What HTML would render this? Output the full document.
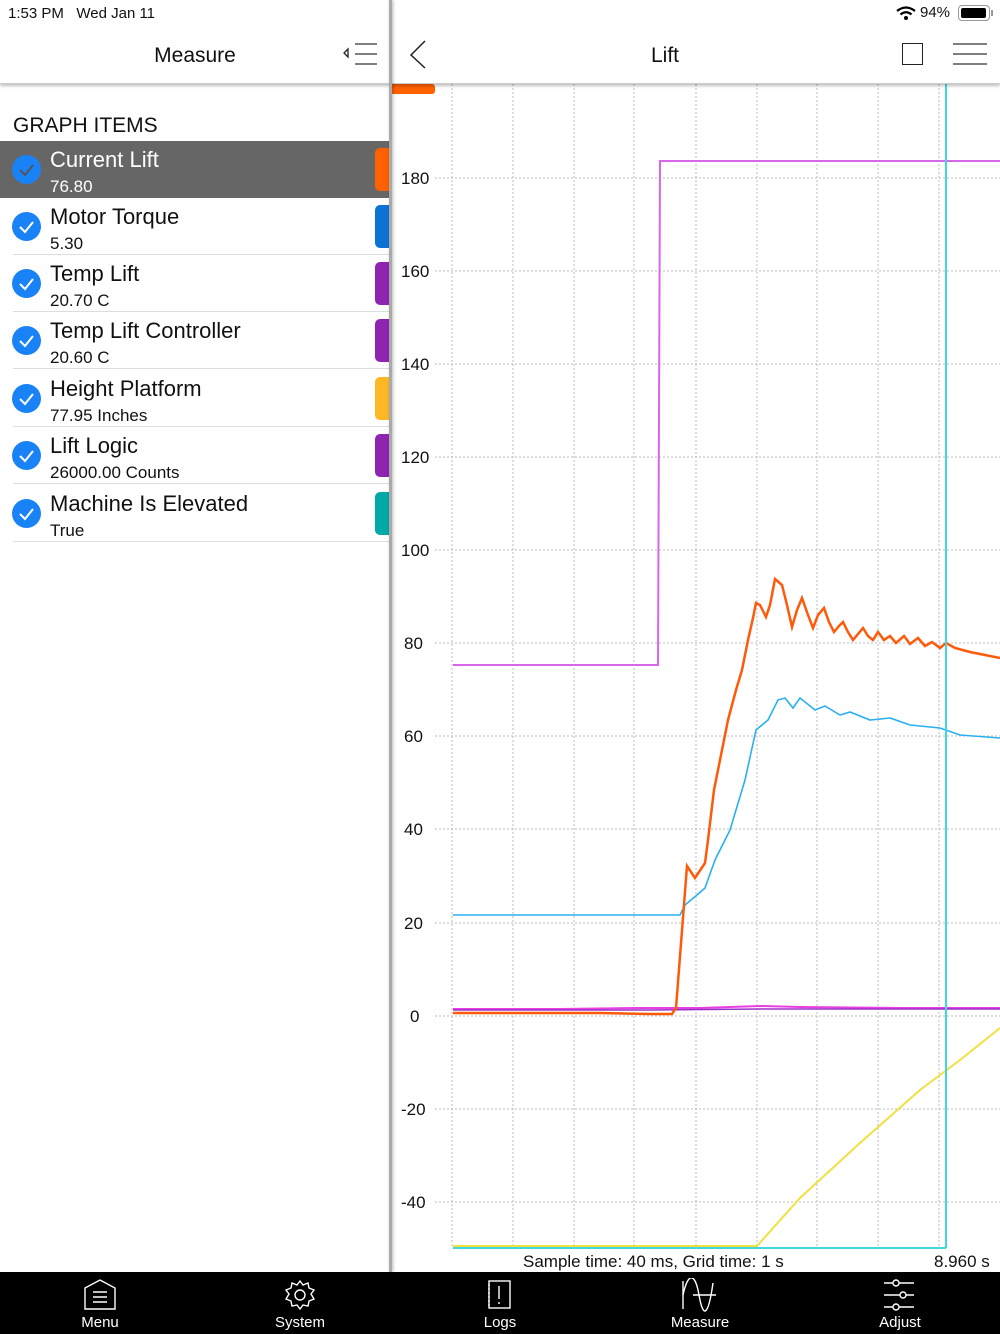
<!DOCTYPE html>
<html><head><meta charset="utf-8"><style>
*{margin:0;padding:0;box-sizing:border-box}
body{width:1000px;height:1334px;position:relative;background:#fff;font-family:"Liberation Sans",sans-serif;overflow:hidden;color:#111}
.abs{position:absolute}
.row{position:absolute;left:0;width:390px;height:57px}
.row .sep{position:absolute;left:13px;right:0;bottom:0;height:1px;background:#ddd}
.chk{position:absolute;left:12px;top:14px;width:29px;height:29px;border-radius:50%;background:#1a82f7}
.name{position:absolute;left:50px;top:6px;font-size:22px}
.val{position:absolute;left:50px;top:36px;font-size:17px}
.tab{position:absolute;left:375px;top:7px;width:15px;height:43px;border-radius:5px 0 0 5px}
.nav{position:absolute;top:1314px;width:80px;text-align:center;color:#fff;font-size:15px}
</style></head><body>
<svg class="abs" style="left:390px;top:0" width="610" height="1272" viewBox="390 0 610 1272">
<g stroke="#bbb" stroke-width="1" stroke-dasharray="2,2">
<line x1="452" y1="84" x2="452" y2="1247"/><line x1="513" y1="84" x2="513" y2="1247"/><line x1="574" y1="84" x2="574" y2="1247"/><line x1="634" y1="84" x2="634" y2="1247"/><line x1="696" y1="84" x2="696" y2="1247"/><line x1="757" y1="84" x2="757" y2="1247"/><line x1="817" y1="84" x2="817" y2="1247"/><line x1="878" y1="84" x2="878" y2="1247"/><line x1="939" y1="84" x2="939" y2="1247"/>
<line x1="435" y1="178" x2="1000" y2="178"/><line x1="435" y1="271" x2="1000" y2="271"/><line x1="435" y1="364" x2="1000" y2="364"/><line x1="435" y1="457" x2="1000" y2="457"/><line x1="435" y1="550" x2="1000" y2="550"/><line x1="435" y1="643" x2="1000" y2="643"/><line x1="435" y1="736" x2="1000" y2="736"/><line x1="435" y1="829" x2="1000" y2="829"/><line x1="435" y1="923" x2="1000" y2="923"/><line x1="435" y1="1016" x2="1000" y2="1016"/><line x1="435" y1="1109" x2="1000" y2="1109"/><line x1="435" y1="1202" x2="1000" y2="1202"/>
</g>
<g font-size="17" fill="#111" font-family="Liberation Sans,sans-serif">
<text x="401" y="184">180</text><text x="401" y="277">160</text><text x="401" y="370">140</text><text x="401" y="463">120</text><text x="401" y="556">100</text><text x="404" y="649">80</text><text x="404" y="742">60</text><text x="404" y="835">40</text><text x="404" y="929">20</text><text x="410" y="1022">0</text><text x="401" y="1115">-20</text><text x="401" y="1208">-40</text>
</g>
<polyline fill="none" stroke="#d668e8" stroke-width="2" points="453,665 658,665 660,161 1000,161"/>
<polyline fill="none" stroke="#e840e0" stroke-width="2" points="453,1009 560,1009 640,1008 700,1008 760,1006 800,1007 900,1008 1000,1008"/>
<polyline fill="none" stroke="#9b30c8" stroke-width="1.5" points="453,1010 650,1010 760,1009 1000,1009"/>
<polyline fill="none" stroke="#f0e040" stroke-width="2" points="453,1246 757,1246 800,1198 860,1143 920,1090 960,1060 1000,1028"/>
<polyline fill="none" stroke="#29b0f0" stroke-width="1.6" points="453,915 680,915 685,905 697,895 705,888 715,860 730,830 745,780 756,730 768,720 778,700 785,698 793,708 800,698 815,710 825,706 840,715 850,712 870,720 890,718 910,725 940,728 960,735 1000,738"/>
<polyline fill="none" stroke="#ff5a0a" stroke-width="2.5" points="453,1013 600,1013 650,1014 672,1014 676,1008 687,866 695,878 705,863 708,840 714,790 720,760 728,720 736,690 742,670 748,640 753,618 756,603 760,605 766,617 770,605 775,579 782,585 787,605 792,627 797,610 802,598 808,615 813,628 818,615 824,608 829,622 834,632 839,626 843,622 848,632 853,640 858,634 863,628 868,636 873,640 878,632 884,640 890,636 896,643 904,636 910,644 918,638 925,646 932,642 940,648 946,643 955,648 970,652 985,655 1000,658"/>
<line x1="946" y1="84" x2="946" y2="1248" stroke="#40d8e0" stroke-width="2"/>
<line x1="453" y1="1248" x2="946" y2="1248" stroke="#40d8e0" stroke-width="2"/>
<rect x="390" y="84" width="45" height="10" rx="3" fill="#ff6000"/>
<text x="523" y="1267" font-size="17" fill="#111" font-family="Liberation Sans,sans-serif">Sample time: 40 ms, Grid time: 1 s</text>
<text x="934" y="1267" font-size="17" fill="#111" font-family="Liberation Sans,sans-serif">8.960 s</text>
</svg>
<div class="abs" style="left:390px;top:0;width:610px;height:84px;background:#fff;border-bottom:1px solid #ccc;box-shadow:0 2px 3px rgba(0,0,0,.25)"></div>
<div class="abs" style="left:0;top:0;width:390px;height:84px;background:#fff;border-bottom:1px solid #ccc;box-shadow:0 2px 3px rgba(0,0,0,.25)"></div>
<div class="abs" style="left:8px;top:5px;font-size:15px">1:53 PM&nbsp;&nbsp;&nbsp;Wed Jan 11</div>
<div class="abs" style="left:0;width:390px;top:44px;text-align:center;font-size:21px">Measure</div>
<svg class="abs" style="left:340px;top:40px" width="40" height="26"><path d="M8 9 L4 13 L8 17 Z" fill="none" stroke="#222" stroke-width="1.3"/><path d="M15 4H37M15 14H37M15 24H37" stroke="#333" stroke-width="1.3"/></svg>
<div class="abs" style="left:390px;width:550px;top:44px;text-align:center;font-size:21px">Lift</div>
<svg class="abs" style="left:405px;top:38px" width="24" height="32"><path d="M20 3 L6 17 L20 30" fill="none" stroke="#222" stroke-width="1.5"/></svg>
<div class="abs" style="left:902px;top:43px;width:21px;height:22px;border:1.5px solid #222"></div>
<svg class="abs" style="left:952px;top:42px" width="36" height="24"><path d="M1 2H35M1 12H35M1 22H35" stroke="#333" stroke-width="1.3"/></svg>
<div class="abs" style="left:920px;top:4px;font-size:15px">94%</div>
<svg class="abs" style="left:895px;top:5px" width="22" height="16"><path d="M2 6 Q11 -1 20 6" fill="none" stroke="#000" stroke-width="2.2"/><path d="M5.5 9.5 Q11 5 16.5 9.5" fill="none" stroke="#000" stroke-width="2.2"/><circle cx="11" cy="13" r="2" fill="#000"/></svg>
<div class="abs" style="left:958px;top:5px;width:32px;height:16px;border:1.5px solid #999;border-radius:4px"></div>
<div class="abs" style="left:961px;top:8px;width:25px;height:10px;background:#000;border-radius:2px"></div>
<div class="abs" style="left:991px;top:10px;width:2px;height:6px;background:#999"></div>
<div class="abs" style="left:13px;top:114px;font-size:21px">GRAPH ITEMS</div>
<div class="row" style="top:141px;background:#666;color:#fff"><div class="chk"></div><svg class="abs" style="left:12px;top:14px" width="29" height="29"><path d="M8 15 L13 20 L21 10" fill="none" stroke="#555" stroke-width="2"/></svg><div class="name">Current Lift</div><div class="val">76.80</div><div class="tab" style="background:#ff6000"></div></div>
<div class="row" style="top:198px"><div class="sep"></div><div class="chk"></div><svg class="abs" style="left:12px;top:14px" width="29" height="29"><path d="M8 15 L13 20 L21 10" fill="none" stroke="#fff" stroke-width="2"/></svg><div class="name">Motor Torque</div><div class="val">5.30</div><div class="tab" style="background:#0c72d4"></div></div>
<div class="row" style="top:255px"><div class="sep"></div><div class="chk"></div><svg class="abs" style="left:12px;top:14px" width="29" height="29"><path d="M8 15 L13 20 L21 10" fill="none" stroke="#fff" stroke-width="2"/></svg><div class="name">Temp Lift</div><div class="val">20.70 C</div><div class="tab" style="background:#8e24b0"></div></div>
<div class="row" style="top:312px"><div class="sep"></div><div class="chk"></div><svg class="abs" style="left:12px;top:14px" width="29" height="29"><path d="M8 15 L13 20 L21 10" fill="none" stroke="#fff" stroke-width="2"/></svg><div class="name">Temp Lift Controller</div><div class="val">20.60 C</div><div class="tab" style="background:#8e24b0"></div></div>
<div class="row" style="top:370px"><div class="sep"></div><div class="chk"></div><svg class="abs" style="left:12px;top:14px" width="29" height="29"><path d="M8 15 L13 20 L21 10" fill="none" stroke="#fff" stroke-width="2"/></svg><div class="name">Height Platform</div><div class="val">77.95 Inches</div><div class="tab" style="background:#fdb823"></div></div>
<div class="row" style="top:427px"><div class="sep"></div><div class="chk"></div><svg class="abs" style="left:12px;top:14px" width="29" height="29"><path d="M8 15 L13 20 L21 10" fill="none" stroke="#fff" stroke-width="2"/></svg><div class="name">Lift Logic</div><div class="val">26000.00 Counts</div><div class="tab" style="background:#8e24b0"></div></div>
<div class="row" style="top:485px"><div class="sep"></div><div class="chk"></div><svg class="abs" style="left:12px;top:14px" width="29" height="29"><path d="M8 15 L13 20 L21 10" fill="none" stroke="#fff" stroke-width="2"/></svg><div class="name">Machine Is Elevated</div><div class="val">True</div><div class="tab" style="background:#00a8a8"></div></div>
<div class="abs" style="left:389px;top:0;width:3px;height:1272px;background:#aaa;box-shadow:1px 0 3px rgba(0,0,0,.3)"></div>
<div class="abs" style="left:0;top:1272px;width:1000px;height:62px;background:#000"></div>
<svg class="abs" style="left:0;top:1278px" width="1000" height="36" fill="none" stroke="#fff" stroke-width="1.4">
<path d="M85 10 L100 2 L115 10 V31 H85 Z"/><path d="M93 14H107M93 19H107M93 24H107"/>
<circle cx="300" cy="17" r="5"/><path d="M300 3 L303 7 L308 5 L309 10 L314 12 L311 16 L314 21 L309 23 L308 28 L303 27 L300 31 L297 27 L292 28 L291 23 L286 21 L289 16 L286 12 L291 10 L292 5 L297 7 Z"/>
<rect x="489" y="3" width="21" height="27"/><path d="M499 8V21M499 24V26"/><path d="M489 6V28" stroke-dasharray="2,2"/>
<path d="M683 3 V31"/><path d="M683 17 C 688 -6, 695 -6, 699 17 C 703 40, 708 40, 713 5"/><path d="M693 17H716"/>
<path d="M884 5H914M884 17H914M884 29H914"/><circle cx="896" cy="5" r="3" fill="#000"/><circle cx="903" cy="17" r="3" fill="#000"/><circle cx="896" cy="29" r="3" fill="#000"/>
</svg>
<div class="nav" style="left:60px">Menu</div>
<div class="nav" style="left:260px">System</div>
<div class="nav" style="left:460px">Logs</div>
<div class="nav" style="left:660px">Measure</div>
<div class="nav" style="left:860px">Adjust</div>
</body></html>
